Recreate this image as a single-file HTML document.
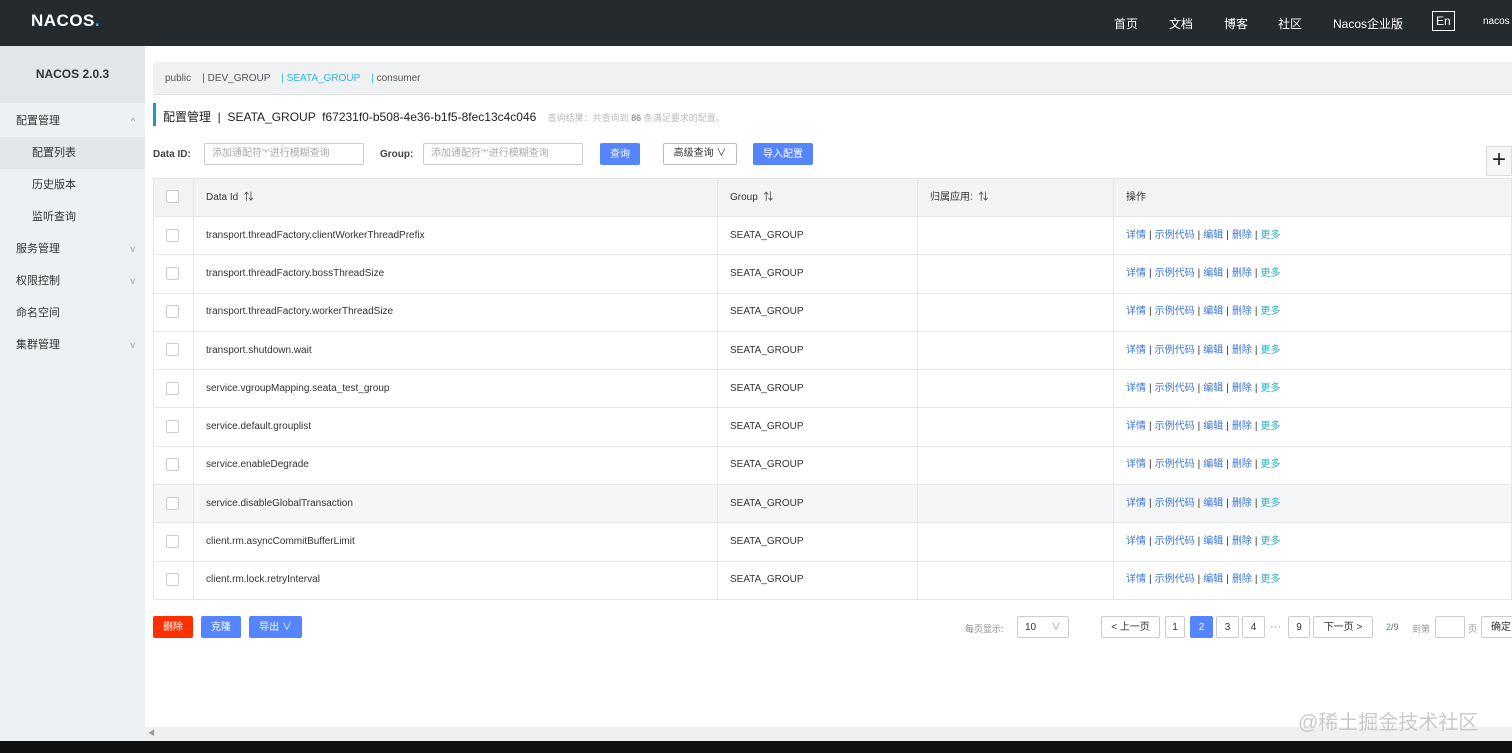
<!DOCTYPE html>
<html><head><meta charset="utf-8"><style>
*{box-sizing:border-box;margin:0;padding:0}
body{width:1512px;height:753px;overflow:hidden;background:#fff;font-family:"Liberation Sans","Noto Sans CJK SC",sans-serif;font-size:11px;color:#333;position:relative}
.abs{position:absolute}
.hdr{left:0;top:0;width:1512px;height:46px;background:#252a2f}
.hdr .nav{position:absolute;top:15px;color:#fff;font-size:12px}
.side{left:0;top:46px;width:145px;height:695px;background:#eef1f3}
.side .ver{height:57px;background:#e2e6e9;text-align:center;line-height:57px;font-weight:bold;font-size:12px;color:#333}
.side .it{height:32px;line-height:32px;padding-left:16px;font-size:11px;color:#333;position:relative}
.side .sub{padding-left:32px}
.side .sel{background:#e3e7ea}
.side .ar{position:absolute;right:10px;top:0;color:#999;font-size:9px}
.ns{left:153px;top:62px;width:1359px;height:33px;background:#f0f1f2;border-bottom:1px solid #e0e0e0;line-height:33px;font-size:10px;color:#555;padding-left:12px}
.inp{position:absolute;height:22px;border:1px solid #ccc;border-radius:2px;font-size:10px;color:#aaa;line-height:20px;padding-left:7px}
.btn{position:absolute;height:22px;line-height:22px;border-radius:2px;font-size:10px;text-align:center;color:#fff;background:#5584ff}
table{position:absolute;left:153px;top:178px;width:1359px;border-collapse:collapse;font-size:10px}
td{border:1px solid #e6e6e6;height:38.3px;padding-left:12px;color:#333;line-height:14px;vertical-align:middle}
tr.h td{background:#f2f3f5;height:38px}
.cb{display:inline-block;width:13px;height:13px;border:1px solid #ccc;border-radius:2px;background:#fff;vertical-align:middle}
.op{color:#3d76d6}.op i{font-style:normal;color:#333;margin:0 3px}.op b{font-weight:normal;color:#2ab0c4}
.pg{position:absolute;top:616px;height:22px;border:1px solid #ccc;border-radius:2px;line-height:20px;text-align:center;font-size:10px;color:#333;background:#fff}
</style></head><body>
<div class="abs hdr">
<div style="position:absolute;left:31px;top:11px;color:#fff;font-weight:bold;font-size:17px;letter-spacing:.5px">NACOS<span style="color:#3fb8e8">.</span></div>
<span class="nav" style="left:1114px">首页</span><span class="nav" style="left:1169px">文档</span><span class="nav" style="left:1224px">博客</span><span class="nav" style="left:1278px">社区</span><span class="nav" style="left:1333px">Nacos企业版</span>
<span class="nav" style="left:1432px;top:11px;border:1px solid #fff;padding:2px 3px">En</span>
<span class="nav" style="left:1483px;font-size:10px;top:16px">nacos</span>
</div>
<div class="abs side">
<div class="ver">NACOS 2.0.3</div>
<div class="it" style="margin-top:2px">配置管理<span class="ar">^</span></div>
<div class="it sub sel">配置列表</div>
<div class="it sub">历史版本</div>
<div class="it sub">监听查询</div>
<div class="it">服务管理<span class="ar">v</span></div>
<div class="it">权限控制<span class="ar">v</span></div>
<div class="it">命名空间</div>
<div class="it">集群管理<span class="ar">v</span></div>
</div>
<div class="abs ns">public &nbsp;&nbsp; | DEV_GROUP &nbsp;&nbsp; <span style="color:#33b5d6">| SEATA_GROUP</span> &nbsp;&nbsp; <span style="color:#33b5d6">|</span> consumer</div>
<div class="abs" style="left:153px;top:103px;width:3px;height:23px;background:#209bbc"></div>
<div class="abs" style="left:163px;top:108px;font-size:12px;color:#222">配置管理 &nbsp;|&nbsp; SEATA_GROUP &nbsp;f67231f0-b508-4e36-b1f5-8fec13c4c046 <span style="font-size:9px;color:#bbb;margin-left:8px">查询结果：共查询到 <b style="color:#999">86</b> 条满足要求的配置。</span></div>
<div class="abs" style="left:153px;top:149px;font-weight:bold;font-size:10px;color:#444">Data ID:</div>
<div class="inp" style="left:204px;top:143px;width:160px">添加通配符'*'进行模糊查询</div>
<div class="abs" style="left:380px;top:149px;font-weight:bold;font-size:10px;color:#444">Group:</div>
<div class="inp" style="left:423px;top:143px;width:160px">添加通配符'*'进行模糊查询</div>
<div class="btn" style="left:600px;top:143px;width:40px;line-height:24px">查询</div>
<div class="btn" style="left:663px;top:143px;width:74px;background:#fff;color:#333;border:1px solid #bbb;line-height:20px">高级查询 ∨</div>
<div class="btn" style="left:753px;top:143px;width:60px;line-height:24px">导入配置</div>
<div class="abs" style="left:1486px;top:146px;width:26px;height:30px;border:1px solid #ddd;background:#f6f6f6;font-size:24px;line-height:26px;text-align:center;color:#222">+</div>
<table>
<tr class="h"><td style="width:40px"><span class="cb"></span></td><td style="width:524px">Data Id &nbsp;⇅</td><td style="width:200px">Group &nbsp;⇅</td><td style="width:196px">归属应用: &nbsp;⇅</td><td>操作</td></tr>
<tr><td><span class="cb"></span></td><td>transport.threadFactory.clientWorkerThreadPrefix</td><td>SEATA_GROUP</td><td></td><td class="op">详情<i>|</i>示例代码<i>|</i>编辑<i>|</i>删除<i>|</i><b>更多</b></td></tr>
<tr><td><span class="cb"></span></td><td>transport.threadFactory.bossThreadSize</td><td>SEATA_GROUP</td><td></td><td class="op">详情<i>|</i>示例代码<i>|</i>编辑<i>|</i>删除<i>|</i><b>更多</b></td></tr>
<tr><td><span class="cb"></span></td><td>transport.threadFactory.workerThreadSize</td><td>SEATA_GROUP</td><td></td><td class="op">详情<i>|</i>示例代码<i>|</i>编辑<i>|</i>删除<i>|</i><b>更多</b></td></tr>
<tr><td><span class="cb"></span></td><td>transport.shutdown.wait</td><td>SEATA_GROUP</td><td></td><td class="op">详情<i>|</i>示例代码<i>|</i>编辑<i>|</i>删除<i>|</i><b>更多</b></td></tr>
<tr><td><span class="cb"></span></td><td>service.vgroupMapping.seata_test_group</td><td>SEATA_GROUP</td><td></td><td class="op">详情<i>|</i>示例代码<i>|</i>编辑<i>|</i>删除<i>|</i><b>更多</b></td></tr>
<tr><td><span class="cb"></span></td><td>service.default.grouplist</td><td>SEATA_GROUP</td><td></td><td class="op">详情<i>|</i>示例代码<i>|</i>编辑<i>|</i>删除<i>|</i><b>更多</b></td></tr>
<tr><td><span class="cb"></span></td><td>service.enableDegrade</td><td>SEATA_GROUP</td><td></td><td class="op">详情<i>|</i>示例代码<i>|</i>编辑<i>|</i>删除<i>|</i><b>更多</b></td></tr>
<tr style="background:#f5f6f7"><td><span class="cb"></span></td><td>service.disableGlobalTransaction</td><td>SEATA_GROUP</td><td></td><td class="op">详情<i>|</i>示例代码<i>|</i>编辑<i>|</i>删除<i>|</i><b>更多</b></td></tr>
<tr><td><span class="cb"></span></td><td>client.rm.asyncCommitBufferLimit</td><td>SEATA_GROUP</td><td></td><td class="op">详情<i>|</i>示例代码<i>|</i>编辑<i>|</i>删除<i>|</i><b>更多</b></td></tr>
<tr><td><span class="cb"></span></td><td>client.rm.lock.retryInterval</td><td>SEATA_GROUP</td><td></td><td class="op">详情<i>|</i>示例代码<i>|</i>编辑<i>|</i>删除<i>|</i><b>更多</b></td></tr>
</table>
<div class="btn" style="left:153px;top:616px;width:40px;background:#ff3000;line-height:24px">删除</div>
<div class="btn" style="left:201px;top:616px;width:40px;line-height:24px">克隆</div>
<div class="btn" style="left:249px;top:616px;width:53px;line-height:24px">导出 ∨</div>
<div class="abs" style="left:965px;top:622px;font-size:9px;color:#888">每页显示:</div>
<div class="pg" style="left:1017px;width:52px;text-align:left;padding-left:7px;line-height:22px">10 <span style="float:right;margin-right:7px;color:#999">∨</span></div>
<div class="pg" style="left:1101px;width:59px;line-height:22px">&lt; 上一页</div>
<div class="pg" style="left:1165px;width:20px;line-height:22px">1</div>
<div class="pg" style="left:1190px;width:23px;background:#5584ff;border-color:#5584ff;color:#fff;line-height:22px">2</div>
<div class="pg" style="left:1216px;width:23px;line-height:22px">3</div>
<div class="pg" style="left:1242px;width:23px;line-height:22px">4</div>
<div class="abs" style="left:1270px;top:621px;color:#888">···</div>
<div class="pg" style="left:1288px;width:22px;line-height:22px">9</div>
<div class="pg" style="left:1313px;width:60px;line-height:22px">下一页 &gt;</div>
<div class="abs" style="left:1386px;top:622px;font-size:9px;color:#666"><span style="color:#5584ff">2</span>/9</div>
<div class="abs" style="left:1412px;top:622px;font-size:9px;color:#999">到第</div>
<div class="pg" style="left:1435px;width:30px"></div>
<div class="abs" style="left:1468px;top:622px;font-size:9px;color:#999">页</div>
<div class="pg" style="left:1481px;width:40px;line-height:22px">确定</div>
<div class="abs" style="left:145px;top:727px;width:1367px;height:14px;background:#f0f0f0"><span style="position:absolute;left:3px;top:1px;font-size:7px;color:#999">◀</span></div>
<div class="abs" style="left:1298px;top:706px;font-size:20px;color:#c9c9c9">@稀土掘金技术社区</div>
<div class="abs" style="left:0;top:741px;width:1512px;height:12px;background:#111"></div>
</body></html>
